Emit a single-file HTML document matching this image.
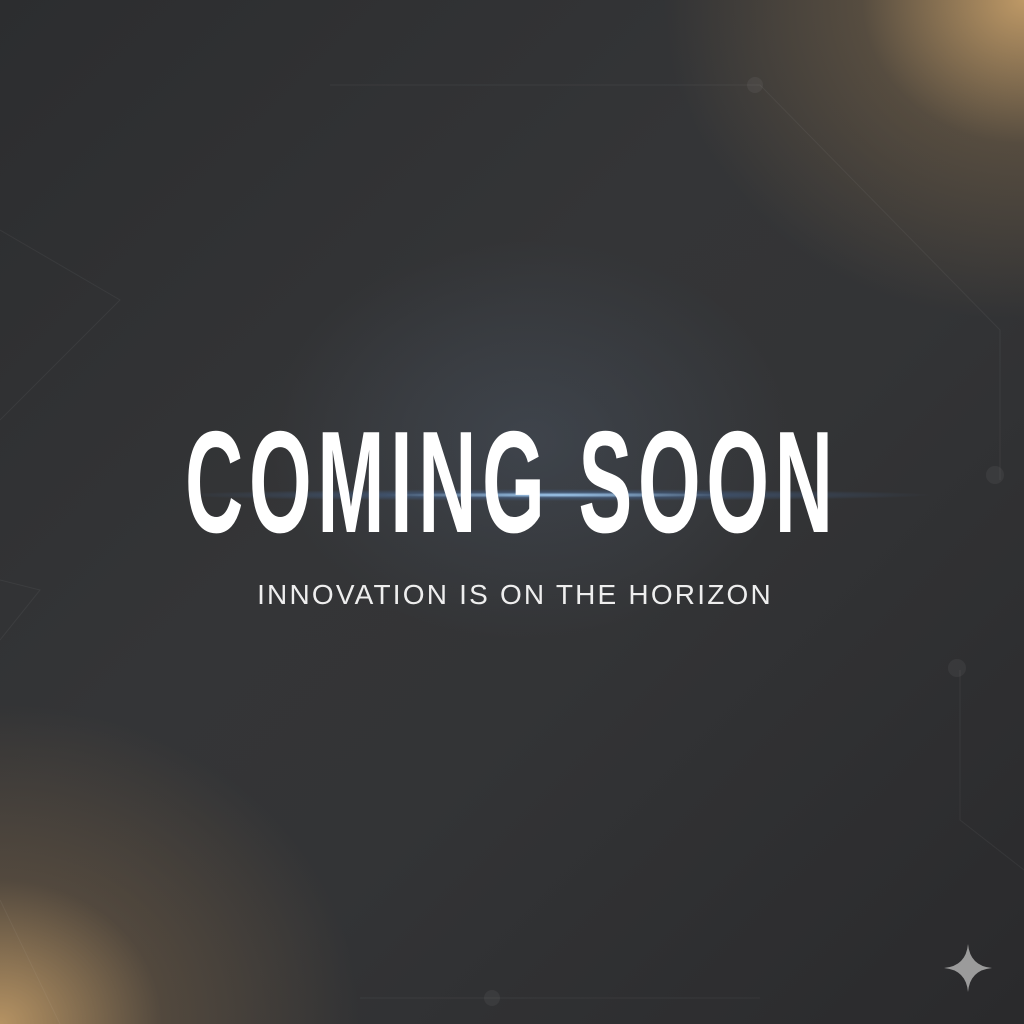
<!DOCTYPE html>
<html><head><style>
html,body{margin:0;padding:0}
body{width:1024px;height:1024px;overflow:hidden;position:relative;background:#2f3032;font-family:"Liberation Sans",sans-serif}
.bg{position:absolute;inset:0;background:
radial-gradient(ellipse 360px 320px at 1024px 0px,rgba(214,170,110,.85),rgba(150,120,80,.35) 45%,rgba(0,0,0,0) 100%),
radial-gradient(ellipse 360px 320px at 0px 1024px,rgba(214,170,110,.8),rgba(140,110,75,.35) 45%,rgba(0,0,0,0) 100%),
radial-gradient(ellipse 260px 200px at 530px 440px,rgba(85,100,120,.32),rgba(0,0,0,0) 100%),
linear-gradient(135deg,#2c2d2f 0%,#343537 40%,#333436 60%,#2a2a2c 100%)}
.flare{position:absolute;left:0;width:1024px;top:486px;height:18px;background:radial-gradient(ellipse 380px 6px at 555px 9px,rgba(170,215,255,.95),rgba(80,130,200,.3) 45%,rgba(0,0,0,0) 100%)}
.title{position:absolute;top:402px;left:185px;height:160px;font-weight:bold;font-size:145px;line-height:160px;color:#fff;transform:scaleX(.557);transform-origin:0 0;letter-spacing:10px;white-space:nowrap}
.sub{position:absolute;top:575px;left:0;width:1030px;text-align:center;font-size:28px;color:#eee;line-height:40px;letter-spacing:2.2px;white-space:nowrap}
svg.l{position:absolute;inset:0}
</style></head><body>
<div class="bg"></div>
<svg class="l" width="1024" height="1024">
<g stroke="rgba(255,255,255,.05)" fill="none" stroke-width="1">
<path d="M330 85 H760 L1000 330 V480"/>
<path d="M0 230 L120 300 L0 420"/>
<path d="M0 580 L40 590 L0 640"/>
<path d="M960 670 V820 L1024 870"/>
<path d="M360 998 H760"/>
<path d="M0 900 L60 1024"/>
</g>
<g fill="rgba(255,255,255,.05)">
<circle cx="755" cy="85" r="8"/><circle cx="995" cy="475" r="9"/><circle cx="957" cy="668" r="9"/><circle cx="492" cy="998" r="8"/>
</g>
</svg>
<div class="flare"></div>
<div class="title">COMING SOON</div>
<div class="sub">INNOVATION IS ON THE HORIZON</div>
<svg style="position:absolute;left:944px;top:944px" width="48" height="48" viewBox="0 0 48 48"><path d="M24 0 Q26 22 48 24 Q26 26 24 48 Q22 26 0 24 Q22 22 24 0Z" fill="#9b9b9b"/></svg>
</body></html>
